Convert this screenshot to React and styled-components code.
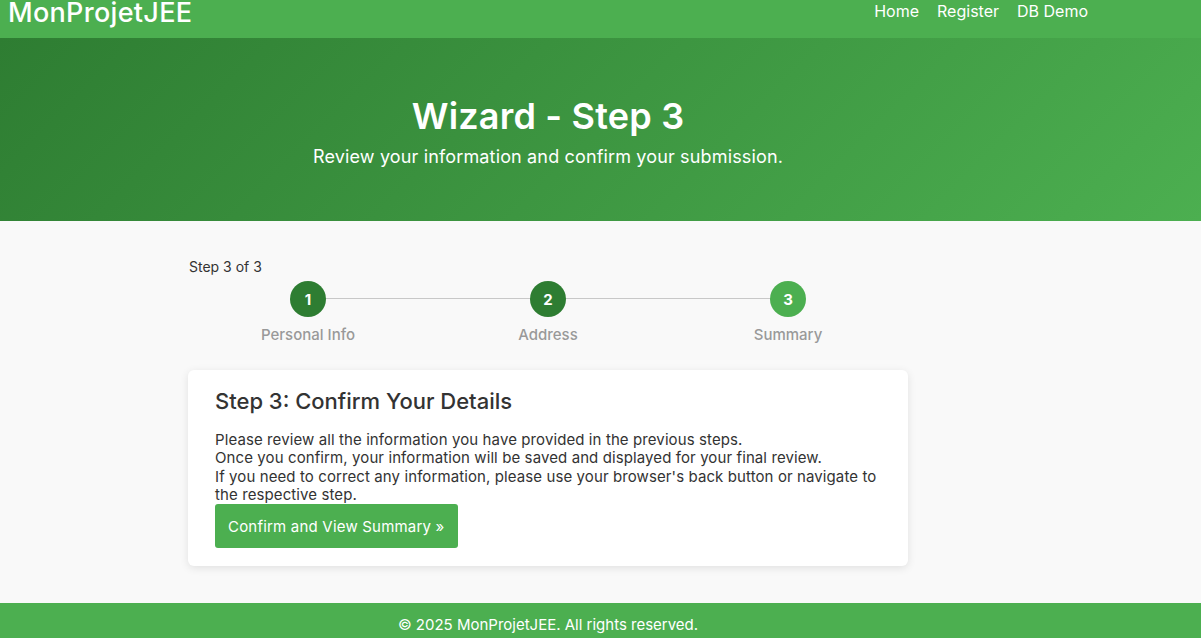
import React from 'react';
import styled, { createGlobalStyle } from 'styled-components';

const GlobalStyle = createGlobalStyle`
  * { box-sizing: border-box; }
  body {
    margin: 0;
    font-family: Inter, 'Open Sans', sans-serif;
    background: #f9f9f9;
    color: #333;
  }
`;

const steps = ['Personal Info', 'Address', 'Summary'];
const current = 3;

export default function App() {
  return (
    <>
      <GlobalStyle />
      <Navbar>
        <Inner>
          <Brand>MonProjetJEE</Brand>
          <NavLinks>
            <NavLink>Home</NavLink>
            <NavLink>Register</NavLink>
            <NavLink>DB Demo</NavLink>
          </NavLinks>
        </Inner>
      </Navbar>
      <Hero>
        <HeroInner>
          <HeroTitle>Wizard - Step 3</HeroTitle>
          <HeroText>Review your information and confirm your submission.</HeroText>
        </HeroInner>
      </Hero>
      <Main>
        <Container>
          <StepCount>Step 3 of 3</StepCount>
          <Stepper>
            {steps.map((label, i) => (
              <Step key={label} $first={i === 0} $last={i === steps.length - 1}>
                <Circle $active={i + 1 === current}>{i + 1}</Circle>
                <StepLabel>{label}</StepLabel>
              </Step>
            ))}
          </Stepper>
          <Card>
            <CardTitle>Step 3: Confirm Your Details</CardTitle>
            <Text>
              Please review all the information you have provided in the previous steps.
              <br />
              Once you confirm, your information will be saved and displayed for your final review.
              <br />
              If you need to correct any information, please use your browser's back button or navigate to the respective step.
            </Text>
            <Button>Confirm and View Summary »</Button>
          </Card>
        </Container>
      </Main>
      <Footer>
        <FooterInner>© 2025 MonProjetJEE. All rights reserved.</FooterInner>
      </Footer>
    </>
  );
}

const Navbar = styled.header`
  background: #4caf50;
  height: 38px;
  color: #fff;
`;

const Inner = styled.div`
  width: 1096px;
  padding: 0 8px;
  display: flex;
  justify-content: space-between;
  align-items: flex-start;
`;

const Brand = styled.div`
  font-size: 27px;
  font-weight: 500;
  line-height: 26px;
  letter-spacing: 0.3px;
`;

const NavLinks = styled.nav`
  display: flex;
  gap: 18px;
  padding-top: 1px;
`;

const NavLink = styled.a`
  font-size: 16px;
  line-height: 20px;
  color: #fff;
`;

const Hero = styled.section`
  height: 183px;
  background: linear-gradient(135deg, #2e7d32 0%, #4caf50 100%);
  color: #fff;
`;

const HeroInner = styled.div`
  width: 1096px;
  padding-top: 56px;
  text-align: center;
`;

const HeroTitle = styled.h1`
  margin: 0;
  font-size: 36px;
  font-weight: 600;
  line-height: 44px;
  letter-spacing: 0.2px;
`;

const HeroText = styled.p`
  margin: 8px 0 0;
  font-size: 18px;
  line-height: 22px;
  letter-spacing: 0.15px;
`;

const Main = styled.main`
  width: 1096px;
  padding: 37px 0 37px;
`;

const Container = styled.div`
  width: 720px;
  margin: 0 auto;
`;

const StepCount = styled.div`
  font-size: 14px;
  line-height: 18px;
  padding-left: 1px;
`;

const Stepper = styled.div`
  display: grid;
  grid-template-columns: repeat(3, 1fr);
  margin-top: 5px;
`;

const Step = styled.div`
  position: relative;
  display: flex;
  flex-direction: column;
  align-items: center;
  &::before {
    content: '';
    position: absolute;
    top: 17px;
    height: 1px;
    background: #c8c8c8;
    left: ${(p) => (p.$first ? '50%' : '0')};
    right: ${(p) => (p.$last ? '50%' : '0')};
  }
`;

const Circle = styled.div`
  position: relative;
  width: 36px;
  height: 36px;
  border-radius: 50%;
  background: ${(p) => (p.$active ? '#4caf50' : '#2e7d32')};
  color: #fff;
  font-size: 15px;
  font-weight: 700;
  display: flex;
  align-items: center;
  justify-content: center;
`;

const StepLabel = styled.div`
  margin-top: 9px;
  font-size: 15px;
  font-weight: 500;
  color: #999;
  line-height: 18px;
`;

const Card = styled.div`
  margin-top: 26px;
  background: #fff;
  border-radius: 6px;
  box-shadow: 0 2px 8px rgba(0, 0, 0, 0.1);
  padding: 17px 27px 18px;
`;

const CardTitle = styled.h2`
  margin: 0;
  font-size: 22px;
  font-weight: 500;
  line-height: 28px;
  color: #333;
`;

const Text = styled.p`
  margin: 16px 0 0;
  font-size: 15px;
  line-height: 18.3px;
  letter-spacing: 0.1px;
  color: #333;
`;

const Button = styled.button`
  margin-top: 0;
  background: #4caf50;
  color: #fff;
  border: none;
  border-radius: 3px;
  height: 44px;
  padding: 0 13px;
  font-family: inherit;
  font-size: 15px;
  font-weight: 400;
  letter-spacing: 0.2px;
`;

const Footer = styled.footer`
  background: #4caf50;
  height: 40px;
  color: #fff;
`;

const FooterInner = styled.div`
  width: 1096px;
  text-align: center;
  padding-top: 12px;
  font-size: 15px;
  line-height: 20px;
`;
